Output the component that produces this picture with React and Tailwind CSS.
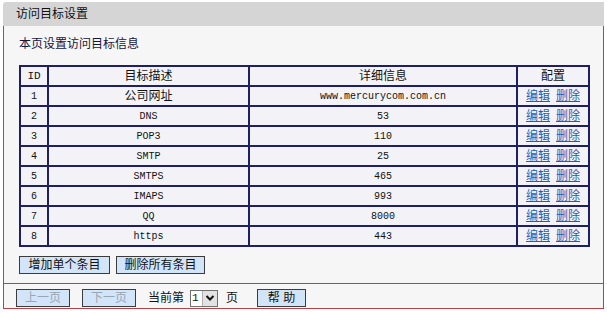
import React from 'react';

const rows = [
  { id: 1, name: '公司网址', info: 'www.mercurycom.com.cn', cn: true },
  { id: 2, name: 'DNS', info: '53' },
  { id: 3, name: 'POP3', info: '110' },
  { id: 4, name: 'SMTP', info: '25' },
  { id: 5, name: 'SMTPS', info: '465' },
  { id: 6, name: 'IMAPS', info: '993' },
  { id: 7, name: 'QQ', info: '8000' },
  { id: 8, name: 'https', info: '443' },
];

const cell = 'border-2 border-[#1f1f66] h-[20px] p-0 text-center align-middle';
const mono = "font-['Liberation_Mono','Courier_New',monospace] text-[10px]";

function Btn({ children, disabled, className = '' }) {
  return (
    <button
      className={`h-[18px] bg-[#d2e4f8] border border-[#3c3c3c] text-[12px] leading-[16px] ${
        disabled ? 'text-[#97a6b4]' : 'text-[#111]'
      } ${className}`}
    >
      {children}
    </button>
  );
}

export default function App() {
  return (
    <div className="bg-white w-[607px] h-[314px] pt-[2px] pl-[3px] font-['Liberation_Sans','Noto_Sans_CJK_SC',sans-serif] text-[#111]">
      <div className="w-[601px] h-[24px] bg-[#d5d5d5] rounded-tl-[3px] pl-[13px] text-[12px] leading-[24px]">
        访问目标设置
      </div>
      <div className="w-[601px] border-x border-b border-[#b8404a] bg-[#f6f6f6]">
        <p className="pl-[15px] pt-[10px] text-[12px] leading-[16px] text-[#14143c]">本页设置访问目标信息</p>

        <table className="mt-[13px] ml-[15px] w-[569px] border-collapse border-2 border-[#1f1f66] table-fixed bg-[#f3f3f7]">
          <colgroup>
            <col className="w-[28px]" />
            <col className="w-[201px]" />
            <col className="w-[268px]" />
            <col className="w-[72px]" />
          </colgroup>
          <thead>
            <tr>
              <th className={`${cell} ${mono} font-normal text-[11px]`}>ID</th>
              <th className={`${cell} text-[12px] font-normal`}>目标描述</th>
              <th className={`${cell} text-[12px] font-normal`}>详细信息</th>
              <th className={`${cell} text-[12px] font-normal`}>配置</th>
            </tr>
          </thead>
          <tbody>
            {rows.map((r) => (
              <tr key={r.id}>
                <td className={`${cell} ${mono}`}>{r.id}</td>
                <td className={`${cell} ${r.cn ? 'text-[12px]' : mono}`}>{r.name}</td>
                <td className={`${cell} ${mono}`}>{r.info}</td>
                <td className={`${cell} text-[12px] leading-[14px]`}>
                  <a href="#" className="text-[#1c5fb8] underline">编辑</a>
                  <a href="#" className="ml-[6px] text-[#1c5fb8] underline">删除</a>
                </td>
              </tr>
            ))}
          </tbody>
        </table>

        <div className="mt-[9px] ml-[15px] flex gap-[6px]">
          <Btn className="w-[91px]">增加单个条目</Btn>
          <Btn className="w-[89px]">删除所有条目</Btn>
        </div>

        <div className="mt-[9px] border-t border-[#b8404a] flex items-center pl-[12px] pt-[5px] pb-[1px] text-[12px]">
          <Btn disabled className="w-[54px]">上一页</Btn>
          <Btn disabled className="w-[54px] ml-[12px]">下一页</Btn>
          <span className="ml-[12px] leading-[16px]">当前第</span>
          <div className="ml-[6px] h-[17px] w-[28px] flex border border-[#707070] bg-white">
            <span className={`${mono} text-[11px] leading-[15px] pl-[1px] w-[11px]`}>1</span>
            <span className="flex-1 bg-[#e2e2e2] border-l border-[#b0b0b0] flex items-center justify-center">
              <svg width="10" height="8" viewBox="0 0 10 8">
                <path d="M1.5 2 L5 5.5 L8.5 2" fill="none" stroke="#111" strokeWidth="2" />
              </svg>
            </span>
          </div>
          <span className="ml-[8px] leading-[16px]">页</span>
          <Btn className="w-[49px] ml-[19px]">帮 助</Btn>
        </div>
      </div>
    </div>
  );
}
